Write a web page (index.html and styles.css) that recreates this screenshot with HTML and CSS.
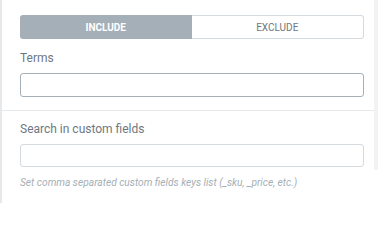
FILE: index.html
```html
<!DOCTYPE html>
<html>
<head>
<meta charset="utf-8">
<link rel="stylesheet" href="styles.css">
</head>
<body>
<div class="panel">
  <div class="main">
    <div class="section top">
      <div class="toggle">
        <div class="opt active">INCLUDE</div>
        <div class="opt">EXCLUDE</div>
      </div>
      <div class="label">Terms</div>
      <div class="input focused"></div>
    </div>
    <div class="section bottom">
      <div class="label">Search in custom fields</div>
      <div class="input"></div>
      <div class="desc">Set comma separated custom fields keys list (_sku, _price, etc.)</div>
    </div>
  </div>
  <div class="scroll"><div class="track"></div></div>
</div>
</body>
</html>
```
FILE: styles.css
```css
html, body { margin: 0; padding: 0; background: #fff; }
body { width: 380px; height: 203px; overflow: hidden; font-family: Roboto, Arial, sans-serif; }
.panel { display: flex; height: 203px; border-left: 2px solid #e6e9ec; box-sizing: border-box; }
.main { flex: 1; }
.section { padding: 0 10px 0 18px; }
.top { padding-top: 15px; padding-bottom: 13px; border-bottom: 1px solid #e6e9ec; }
.bottom { padding-top: 11px; }
.toggle { display: flex; height: 24px; }
.opt { flex: 1; display: flex; align-items: center; justify-content: center; font-size: 10px; box-sizing: border-box; }
.opt.active { background: #a4afb7; color: #fff; font-weight: 700; border-radius: 3px 0 0 3px; }
.opt:not(.active) { border: 1px solid #d5dadf; border-left: none; color: #6d7882; border-radius: 0 3px 3px 0; }
.label { font-size: 12px; color: #6d7882; margin-top: 12px; height: 15px; line-height: 15px; margin-bottom: 7px; }
.bottom .label { margin-top: 0; margin-bottom: 7px; }
.input { height: 24px; border: 1px solid #d5dadf; border-radius: 3px; box-sizing: border-box; }
.input.focused { border-color: #a4afb7; }
.bottom .input { height: 23px; }
.desc { font-size: 10.2px; font-style: italic; color: #a4afb7; margin-top: 9px; line-height: 13px; }
.scroll { width: 4px; padding-right: 2px; }
.track { height: 170px; background: #f1f2f4; border-radius: 0 0 2px 2px; }
```
